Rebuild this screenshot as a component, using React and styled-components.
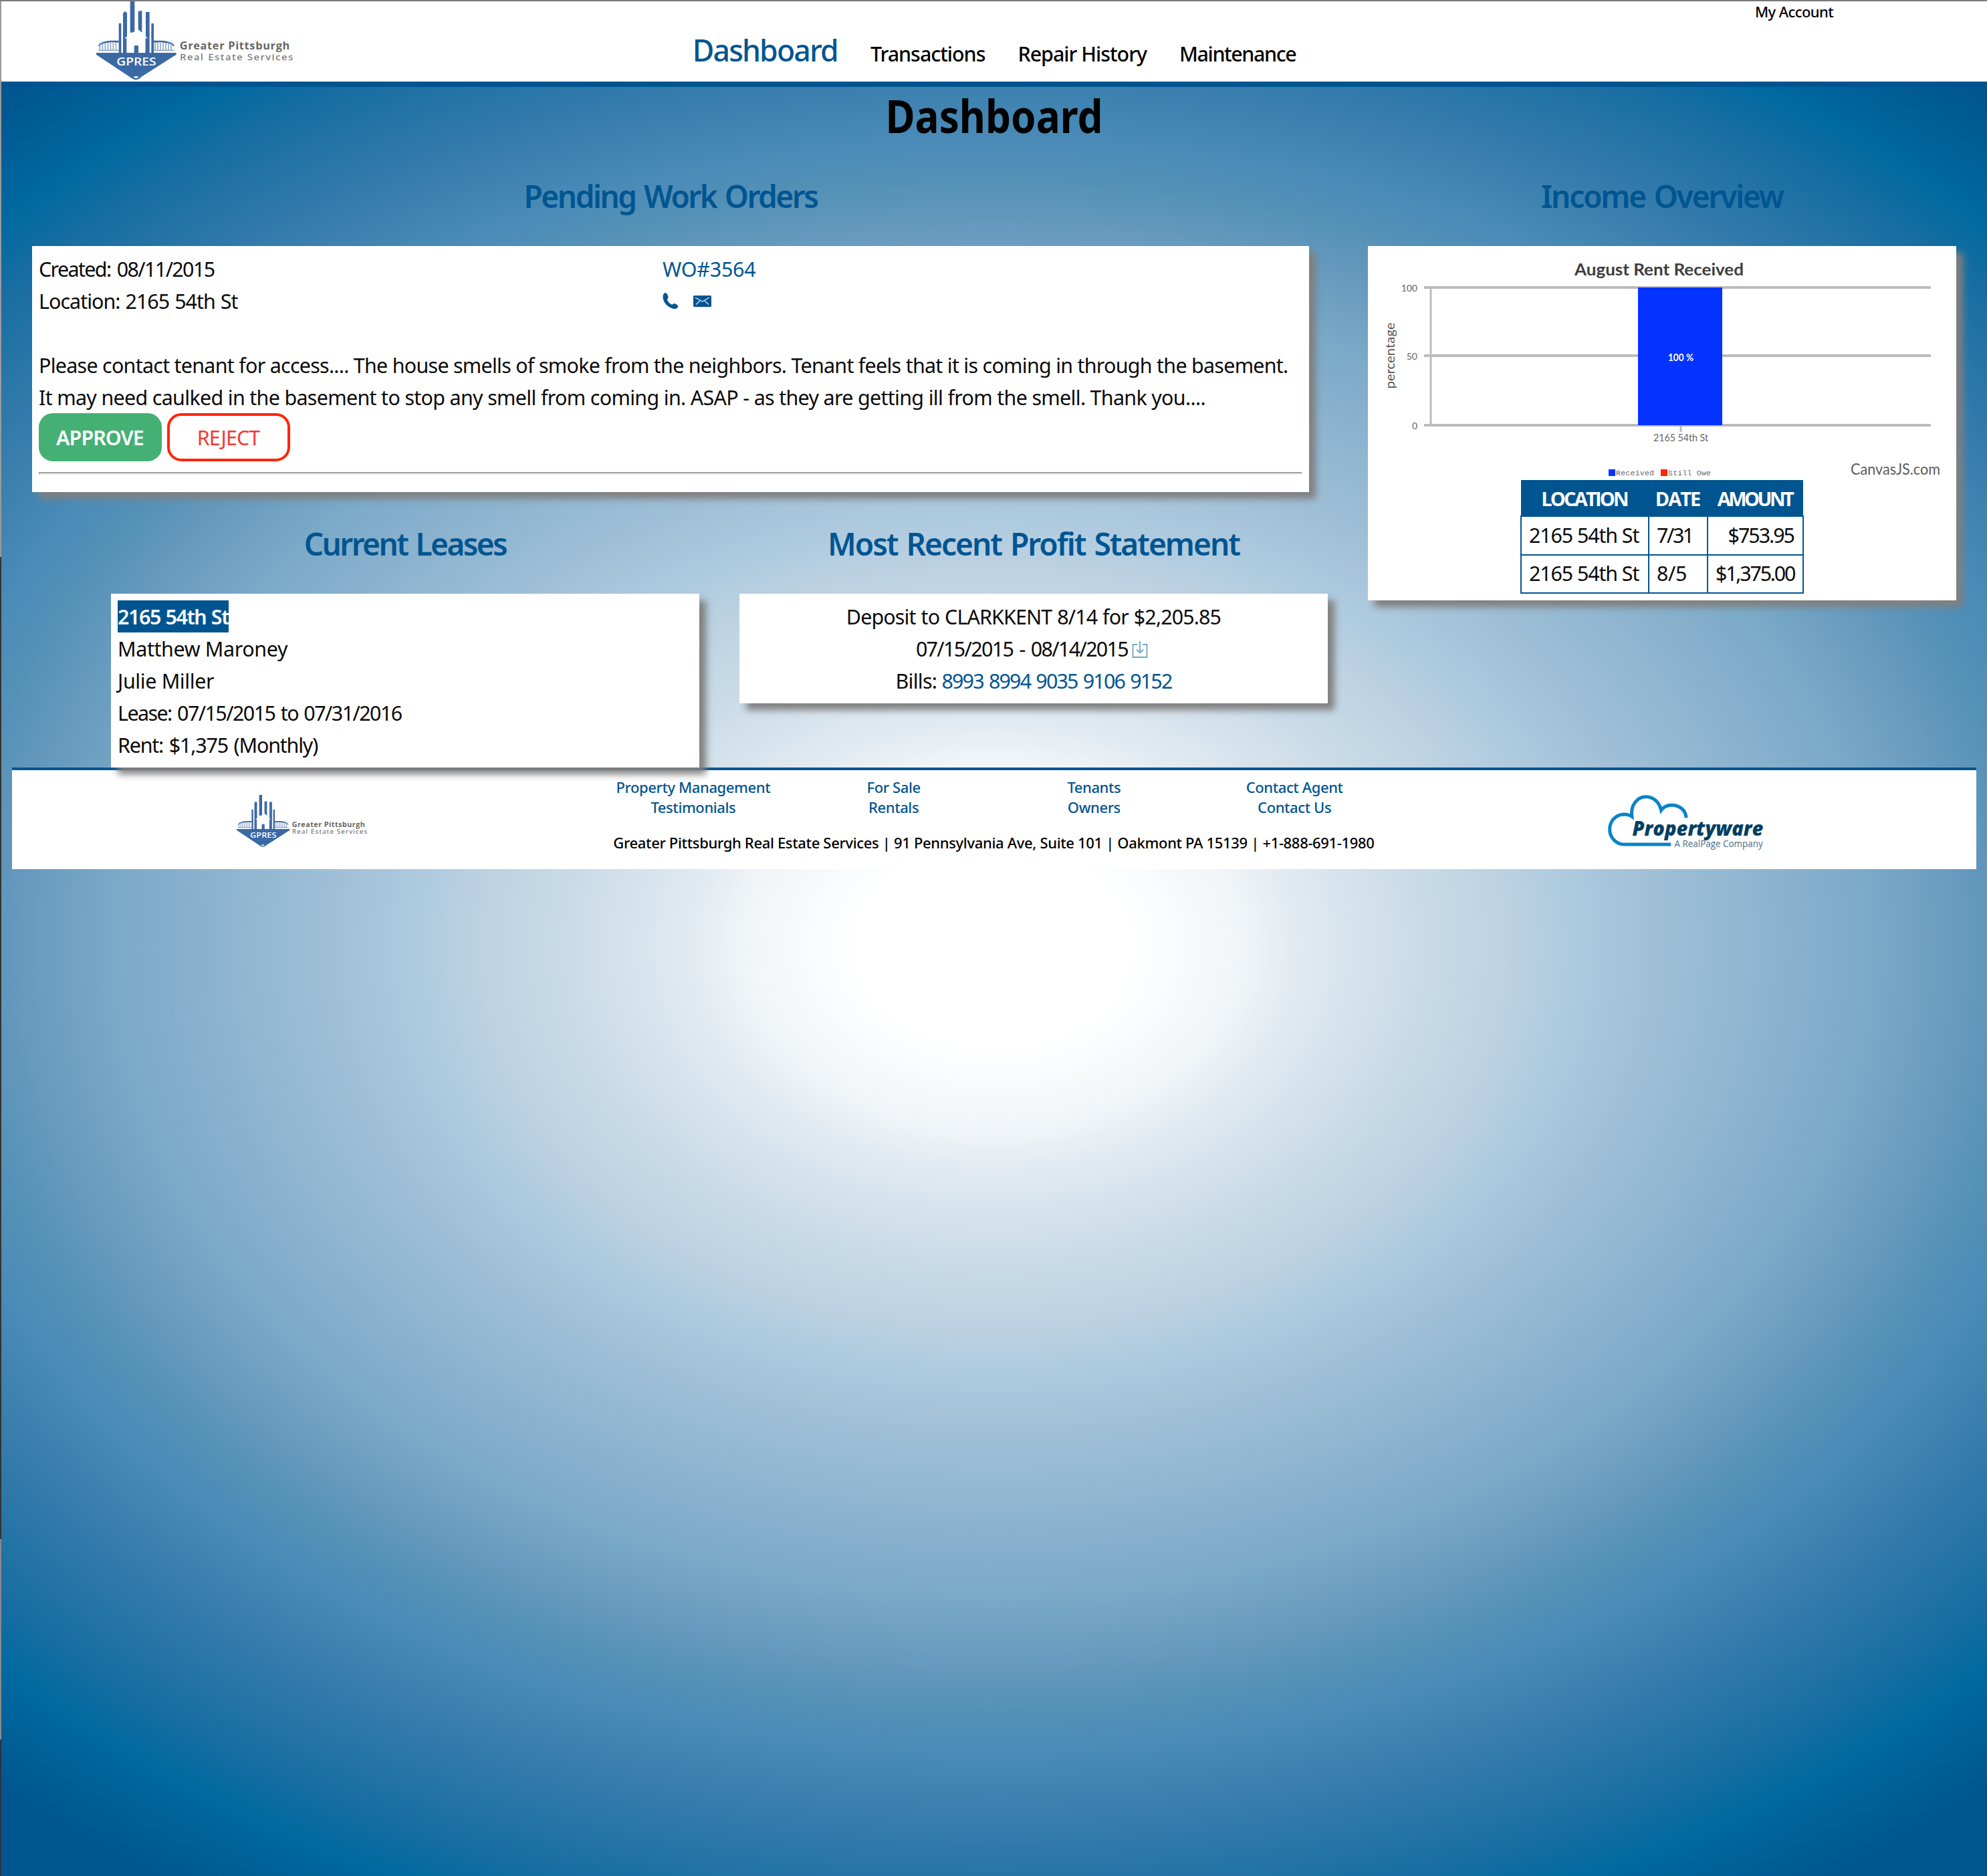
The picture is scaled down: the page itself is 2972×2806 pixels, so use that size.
import React from "react";
import styled, { createGlobalStyle, css } from "styled-components";

const BLUE = "#005591";
const INK = "#0a0a0a";

const GlobalStyle = createGlobalStyle`
  *, *::before, *::after { box-sizing: border-box; }
  html, body { margin: 0; padding: 0; }
  body { font-family: "Noto Sans", "Open Sans", sans-serif; color: ${INK}; }
  a { color: inherit; text-decoration: none; }
`;

const Page = styled.div`
  height: 2806px;
  overflow: hidden;
  padding-left: 2px;
  border-top: 2px solid #7a7a7a;
  background:
    linear-gradient(#9a9a9a 0 831px, #333 831px 2300px, #8a8a8a 2300px 2600px, #2b3440 2600px) 0 0 / 2px 100% no-repeat,
    radial-gradient(
      ellipse 2262px 1670px at 50% 1413px,
      #fff 0%, #fff 9%, #f0f5f8 16.5%, #e1eaf1 20.3%, #c8dae7 28.8%,
      #bdd2e2 33.8%, #b1cce0 37.3%, #a3c1d8 42.8%, #7aa9c8 58.4%,
      #6297bc 65.4%, #5591b7 68.5%, #4a8bb8 72.3%, #3a7fae 77.6%,
      #2f79aa 80.8%, #176da2 88%, #006aa0 92%, #005691 100%
    );
`;

const Header = styled.header`
  display: grid;
  grid-template-columns: 1fr auto 1fr;
  height: 128px;
  background: #fff;
  border-bottom: 8px solid ${BLUE};
`;

const Brand = styled.div`
  padding-left: 142px;
`;

const Nav = styled.nav`
  display: flex;
  align-items: baseline;
  gap: 49px;
  padding-top: 43px;
  line-height: 60px;
`;

const NavLink = styled.a`
  font-size: 30.4px;
  font-weight: 500;
  letter-spacing: ${(p) => p.$ls || -1}px;
  color: #000;
  ${(p) =>
    p.$active &&
    css`
      font-size: 44.5px;
      color: ${BLUE};
    `}
`;

const Account = styled.div`
  padding-right: 230px;
  text-align: right;
  font-size: 22px;
  font-weight: 500;
  line-height: 30px;
  letter-spacing: -0.6px;
  color: #000;
`;

const Title = styled.h1`
  height: 120px;
  margin: 0;
  text-align: center;
  font-size: 68px;
  font-weight: 700;
  line-height: 85px;
  color: #000;
  transform: scaleX(0.885);
`;

const Columns = styled.main`
  display: grid;
  grid-template-columns: 1940px 880px;
  column-gap: 58px;
  height: 898px;
  padding-left: 46px;
`;

const Section = styled.section`
  width: ${(p) => p.$w}px;
`;

const Heading = styled.h2`
  margin: 0 0 32px;
  text-align: center;
  font-size: 46px;
  font-weight: 600;
  line-height: 86px;
  letter-spacing: ${(p) => p.$ls}px;
  word-spacing: 3px;
  color: ${BLUE};
`;

const Card = styled.div`
  padding: 10px;
  background: #fff;
  box-shadow: 10px 10px 10px #808080;
  text-align: ${(p) => p.$align || "left"};
`;

const LowerRow = styled.div`
  display: flex;
  gap: 60px;
  padding: 34px 0 0 118px;
`;

const Line = styled.div`
  height: 48px;
  font-size: 30.4px;
  line-height: 50px;
  white-space: nowrap;
  letter-spacing: ${(p) => p.$ls || 0}px;
  word-spacing: ${(p) => p.$ws || 0}px;
`;

const Pair = styled.div`
  display: grid;
  grid-template-columns: 933px 1fr;
`;

const Accent = styled.a`
  color: ${BLUE};
  letter-spacing: ${(p) => p.$ls || 0}px;
  word-spacing: ${(p) => p.$ws || 0}px;
`;

const IconLine = styled(Line)`
  display: flex;
  align-items: center;
  gap: 22px;
  color: ${BLUE};
`;

const Actions = styled.div`
  display: flex;
  gap: 8px;
`;

const Button = styled.button`
  width: 184px;
  height: 72px;
  padding: 0 1px 0 0;
  border: 4px solid ${(p) => (p.$solid ? "#45b073" : "#ff2600")};
  border-radius: 21px;
  background: ${(p) => (p.$solid ? "#45b073" : "#fff")};
  color: ${(p) => (p.$solid ? "#fff" : "#f13a31")};
  font-family: inherit;
  font-size: 30.4px;
  font-weight: ${(p) => (p.$solid ? 600 : 400)};
  letter-spacing: -0.9px;
`;

const Rule = styled.hr`
  height: 4px;
  margin: 16px 0;
  border: 2px solid #ececec;
  border-top-color: #a2a2a2;
  border-left-color: #a2a2a2;
`;

const Selected = styled.span`
  display: inline-block;
  height: 48px;
  background: ${BLUE};
  color: #fff;
  font-weight: 600;
`;

const DownloadIcon = styled.svg`
  width: 24px;
  height: 26px;
  margin: 0 5px 0 6px;
  vertical-align: -3px;
`;

const Chart = styled.svg`
  display: block;
  width: 860px;
  height: 340px;
  font-family: Lato, "Open Sans", sans-serif;
`;

const Table = styled.table`
  width: 422px;
  margin: 0 auto;
  border-collapse: collapse;
  table-layout: fixed;
  font-size: 30.4px;
`;

const Th = styled.th`
  width: ${(p) => p.$w}px;
  height: 53px;
  padding: 0 2px 0 0;
  background: ${BLUE};
  border-top: 2px solid ${BLUE};
  color: #fff;
  font-family: "Open Sans", sans-serif;
  font-size: 29px;
  font-weight: 700;
  line-height: 50px;
  text-align: center;
  letter-spacing: ${(p) => p.$ls}px;
  white-space: nowrap;
`;

const Td = styled.td`
  height: 57.5px;
  padding: 0 13px 0 11px;
  border: 2px solid ${BLUE};
  line-height: 54px;
  text-align: ${(p) => (p.$end ? "right" : "left")};
  letter-spacing: ${(p) => p.$ls}px;
  white-space: nowrap;
`;

const Footer = styled.footer`
  display: grid;
  grid-template-columns: 868px 1200px 870px;
  width: 2938px;
  height: 152px;
  margin-left: 16px;
  background: #fff;
  border-top: 4px solid ${BLUE};
`;

const FooterLogo = styled.div`
  display: flex;
  justify-content: center;
  padding-top: 37px;
`;

const FooterMain = styled.div`
  padding-top: 10px;
  text-align: center;
  font-size: 22px;
  font-weight: 500;
  line-height: 30px;
`;

const LinkGrid = styled.div`
  display: grid;
  grid-template-columns: repeat(4, 1fr);
  margin-bottom: 23px;
  padding-left: 1px;
  color: ${BLUE};
  letter-spacing: -0.4px;
`;

const Address = styled.div`
  padding-left: 1px;
  letter-spacing: -0.33px;
  color: #000;
`;

/* The lease card's shadow falls over the top of the footer. */
const Raised = styled.div`
  position: relative;
  z-index: 1;
`;

function GpresLogo({ width }) {
  const slats = [58, 70, 82, 94, 106, 118, 130, 306, 318, 330, 342, 354, 366, 378];
  return (
    <svg width={width} height={width * 0.3973} viewBox="42 6 891 354">
      <g fill="#3b69a5">
        <rect x="194" y="6" width="20" height="140" />
        <path d="M162 60 l9 -10 l9 8 V170 l-2 2 V240 H162 Z" />
        <path d="M230 48 l6 4 l8 -6 l3 6 V146 l-17 -14 Z" />
        <path d="M264 54 H281 V240 H262 V170 l2 -4 Z" />
        <rect x="143" y="105" width="11" height="135" />
        <rect x="289" y="105" width="11" height="135" />
        <path d="M42 237 H401 V245 L244 345 Q222 368 200 350 L42 245 Z" />
        <path d="M50 206 Q60 184 110 182 L143 182 V191 L112 190 Q70 192 54 208 Z" />
        <path d="M393 206 Q383 184 333 182 L300 182 V191 L331 190 Q373 192 389 208 Z" />
      </g>
      <path d="M168 172 L221 136 L274 172 H262 V234 H231 V206 Q221 200 212 206 V234 H180 V172 Z" fill="#fff" />
      <path d="M212 206 q10 -6 19 0 V240 H212 Z" fill="#3b69a5" />
      <g stroke="#8fa9cb" strokeWidth="5">
        {slats.map((x) => (
          <path key={x} d={`M${x} 192 V224`} />
        ))}
        <path d="M52 226 H143 M300 226 H391" />
      </g>
      <ellipse cx="220" cy="346" rx="10" ry="4" fill="#fff" />
      <g fontFamily='"Open Sans", sans-serif'>
        <text x="133" y="294" fontSize="46" fontWeight="600" fill="#fff" textLength="178" lengthAdjust="spacingAndGlyphs">
          GPRES
        </text>
        <text x="416" y="222" fontSize="46" fontWeight="700" fill="#666" letterSpacing="2" textLength="496" lengthAdjust="spacingAndGlyphs">
          Greater Pittsburgh
        </text>
        <text x="418" y="269" fontSize="37" fill="#707070" stroke="#707070" strokeWidth="0.8" letterSpacing="5" textLength="512" lengthAdjust="spacingAndGlyphs">
          Real Estate Services
        </text>
      </g>
    </svg>
  );
}

function PropertywareLogo() {
  return (
    <svg width="233" height="85" viewBox="-3 -3 702 256">
      <path
        d="M350 100 C347 64 320 45 288 43 C264 42 248 50 237 66 C228 28 202 5 168 5 C130 5 98 42 105 94 C94 86 82 84 68 84 C30 86 5 117 5 152 C5 190 35 220 70 220 H281"
        fill="none"
        stroke="#0a83c9"
        strokeWidth="15"
      />
      <text x="107" y="180" fontFamily='"Open Sans", sans-serif' fontSize="88" fontWeight="800" fontStyle="italic" fill="#043f63" textLength="590" lengthAdjust="spacingAndGlyphs">
        Propertyware
      </text>
      <text x="297" y="231" fontFamily='"Open Sans", sans-serif' fontSize="45" fill="#4a6d87" textLength="398" lengthAdjust="spacingAndGlyphs">
        A RealPage Company
      </text>
    </svg>
  );
}

function RentChart() {
  const ticks = [
    { label: "100", y: 62 },
    { label: "50", y: 164 },
    { label: "0", y: 268 },
  ];
  return (
    <Chart viewBox="10 10 860 340">
      <text x="309" y="44" fontSize="25" fontWeight="700" fill="#3d3d3d" textLength="253" lengthAdjust="spacingAndGlyphs">
        August Rent Received
      </text>
      {ticks.map((t) => (
        <g key={t.label}>
          <path d={`M84 ${t.y} H842`} stroke="#bbb" strokeWidth="4" />
          <text x="74" y={t.y + 6} fontSize="14" fill="#666" textAnchor="end">
            {t.label}
          </text>
        </g>
      ))}
      <path d="M94 62 V268" stroke="#bbb" strokeWidth="3" />
      <path d="M468 268 V278" stroke="#bbb" strokeWidth="3" />
      <rect x="404" y="62" width="126" height="206" fill="#0433ff" />
      <text x="468" y="172" fontSize="15" fontWeight="700" fill="#fff" textAnchor="middle" textLength="38" lengthAdjust="spacingAndGlyphs">
        100 %
      </text>
      <text x="468" y="292" fontSize="15" fill="#666" textAnchor="middle" textLength="82" lengthAdjust="spacingAndGlyphs">
        2165 54th St
      </text>
      <text transform="translate(40 164) rotate(-90)" fontSize="20" fill="#555" textAnchor="middle" textLength="99" lengthAdjust="spacingAndGlyphs">
        percentage
      </text>
      <rect x="360" y="334" width="10" height="10" fill="#0433ff" />
      <rect x="438" y="334" width="10" height="10" fill="#ff2600" />
      <g fontFamily='"Liberation Mono", monospace' fontSize="11.5" fill="#666">
        <text x="371" y="343" textLength="57">Received</text>
        <text x="449" y="343" textLength="64">Still Owe</text>
      </g>
      <text x="722" y="342" fontSize="23" fill="#5c5c5c" textLength="134" lengthAdjust="spacingAndGlyphs">
        CanvasJS.com
      </text>
    </Chart>
  );
}

const payments = [
  { date: "7/31", dateLs: -2.4, amount: "$753.95", ls: -2 },
  { date: "8/5", dateLs: -0.3, amount: "$1,375.00", ls: -2.2 },
];

const footerLinks = [
  "Property Management", "For Sale", "Tenants", "Contact Agent",
  "Testimonials", "Rentals", "Owners", "Contact Us",
];

export default function App() {
  return (
    <Page>
      <GlobalStyle />
      <Header>
        <Brand>
          <GpresLogo width={297} />
        </Brand>
        <Nav>
          <NavLink $active $ls={-1.8}>Dashboard</NavLink>
          <NavLink>Transactions</NavLink>
          <NavLink>Repair History</NavLink>
          <NavLink $ls={-1.4}>Maintenance</NavLink>
        </Nav>
        <Account>My Account</Account>
      </Header>
      <Title>Dashboard</Title>
      <Columns>
        <Raised>
          <Section $w={1910}>
            <Heading $ls={-2.5}>Pending Work Orders</Heading>
            <Card>
              <Pair>
                <Line $ls={-1.6} $ws={3}>Created: 08/11/2015</Line>
                <Line>
                  <Accent $ls={-0.2}>WO#3564</Accent>
                </Line>
                <Line $ls={-0.95} $ws={1}>Location: 2165 54th St</Line>
                <IconLine>
                  <svg width="24" height="25" viewBox="0 0 24 25" fill="currentColor">
                    <path d="M4 0 C6 0 8 3 8.5 6 C9 8 6.5 9 7 11 C8 13.5 11 16 13.5 17.5 C15.5 18 16 15.5 18 16 C21 17 24 19 23 21 C22 23 20 24.5 17 24 C8 22 0 14 0.5 5 C1 2 2.5 0 4 0Z" />
                  </svg>
                  <svg width="27" height="17" viewBox="0 0 27 17">
                    <rect width="27" height="17" rx="1.5" fill="currentColor" />
                    <path d="M3 3 L13.5 9 L24 3 M4 13.5 L10 8 M23 13.5 L17 8" fill="none" stroke="#d9e6ef" strokeWidth="1.3" />
                  </svg>
                </IconLine>
              </Pair>
              <Line />
              <Line $ls={-0.71}>
                Please contact tenant for access.... The house smells of smoke from the neighbors. Tenant feels that it is coming in through the basement.
              </Line>
              <Line $ls={-0.66}>
                It may need caulked in the basement to stop any smell from coming in. ASAP - as they are getting ill from the smell. Thank you....
              </Line>
              <Actions>
                <Button $solid>APPROVE</Button>
                <Button>REJECT</Button>
              </Actions>
              <Rule />
            </Card>
          </Section>
          <LowerRow>
            <Section $w={880}>
              <Heading $ls={-2.6}>Current Leases</Heading>
              <Card>
                <Line $ls={-1.4} $ws={1}>
                  <Selected>2165 54th St</Selected>
                </Line>
                <Line $ls={-0.36}>Matthew Maroney</Line>
                <Line $ls={-0.36}>Julie Miller</Line>
                <Line $ls={-1.54} $ws={2}>Lease: 07/15/2015 to 07/31/2016</Line>
                <Line $ls={-1.17} $ws={2}>Rent: $1,375 (Monthly)</Line>
              </Card>
            </Section>
            <Section $w={880}>
              <Heading $ls={-2}>Most Recent Profit Statement</Heading>
              <Card $align="center">
                <Line $ls={-0.85} $ws={0.8}>Deposit to CLARKKENT 8/14 for $2,205.85</Line>
                <Line $ls={-1.64} $ws={3}>
                  07/15/2015 - 08/14/2015
                  <DownloadIcon viewBox="0 0 24 26" fill="none" stroke="#6fa5cb" strokeWidth="1.8">
                    <path d="M8 5 H1.5 V24 H22.5 V5 H16 M12 0 V17 M7 12.5 L12 17.5 L17 12.5" />
                  </DownloadIcon>
                </Line>
                <Line $ls={-0.7}>
                  Bills: <Accent $ls={-1.8} $ws={2}>8993 8994 9035 9106 9152</Accent>
                </Line>
              </Card>
            </Section>
          </LowerRow>
        </Raised>
        <Section $w={880}>
          <Heading $ls={-2.2}>Income Overview</Heading>
          <Card>
            <RentChart />
            <Table>
              <thead>
                <tr>
                  <Th $w={191} $ls={-2.8}>LOCATION</Th>
                  <Th $w={88} $ls={-2}>DATE</Th>
                  <Th $w={143} $ls={-3.5}>AMOUNT</Th>
                </tr>
              </thead>
              <tbody>
                {payments.map((p) => (
                  <tr key={p.date}>
                    <Td $ls={-1.1}>2165 54th St</Td>
                    <Td $ls={p.dateLs}>{p.date}</Td>
                    <Td $end $ls={p.ls}>{p.amount}</Td>
                  </tr>
                ))}
              </tbody>
            </Table>
          </Card>
        </Section>
      </Columns>
      <Footer>
        <FooterLogo>
          <GpresLogo width={197} />
        </FooterLogo>
        <FooterMain>
          <LinkGrid>
            {footerLinks.map((l) => (
              <a key={l}>{l}</a>
            ))}
          </LinkGrid>
          <Address>
            Greater Pittsburgh Real Estate Services | 91 Pennsylvania Ave, Suite 101 | Oakmont PA 15139 | +1-888-691-1980
          </Address>
        </FooterMain>
        <FooterLogo>
          <PropertywareLogo />
        </FooterLogo>
      </Footer>
    </Page>
  );
}
